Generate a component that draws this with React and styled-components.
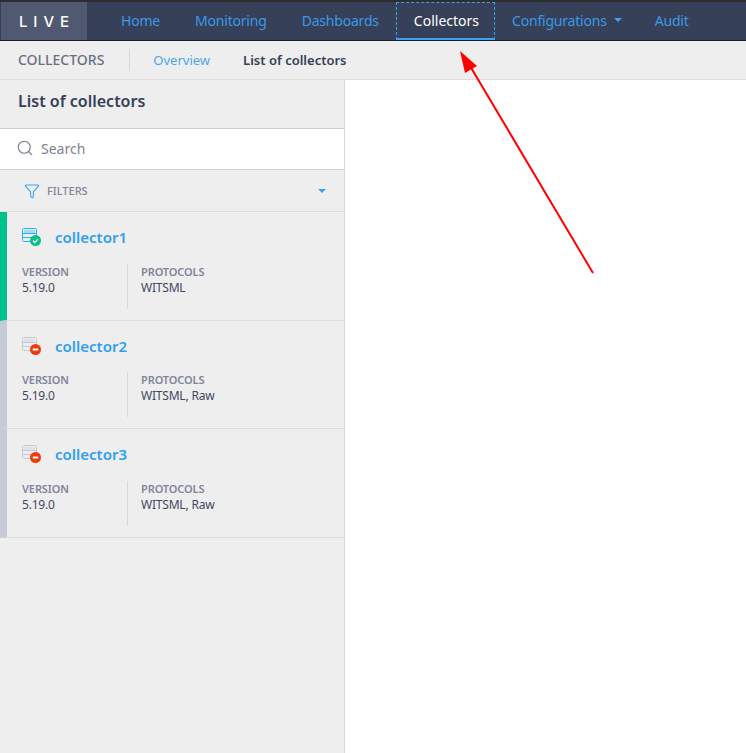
import React from 'react';
import styled, { createGlobalStyle } from 'styled-components';
import { Search, Filter } from 'lucide-react';

const GlobalStyle = createGlobalStyle`
  html, body {
    margin: 0;
    height: 100%;
    background: #fff;
  }
  #root {
    height: 100%;
  }
  * {
    box-sizing: border-box;
  }
`;

const Page = styled.div`
  position: relative;
  height: 753px;
  overflow: hidden;
  display: flex;
  flex-direction: column;
  font-family: "Noto Sans", "Open Sans", sans-serif;
  color: #353f58;
`;

const NavBar = styled.nav`
  height: 41px;
  flex: none;
  display: flex;
  background: #364059;
  border-top: 2px solid #2e2e2e;
  border-bottom: 1px solid #131c30;
  padding-left: 1px;
`;

const Logo = styled.div`
  width: 86px;
  background: #50596f;
  color: #fff;
  font-family: Inter, sans-serif;
  font-size: 15px;
  font-weight: 500;
  letter-spacing: 6px;
  display: flex;
  align-items: center;
  justify-content: center;
  padding-left: 6px;
  margin-right: 16.5px;
`;

const NavItem = styled.a`
  display: flex;
  align-items: center;
  gap: 7px;
  height: 38px;
  font-size: 14px;
  letter-spacing: ${props => props.active ? '0' : '-0.2px'};
  color: ${props => props.active ? '#fff' : '#3a9ae6'};
  padding: ${props => props.active ? '0 14.5px 0 16.5px' : '0 17.5px 2px'};
  border: ${props => props.active ? '1px dashed #36a3f4' : 'none'};
  border-bottom: ${props => props.active ? '2px solid #36a3f4' : 'none'};
`;

const Caret = styled.span`
  width: 0;
  height: 0;
  border-left: 4px solid transparent;
  border-right: 4px solid transparent;
  border-top: 4px solid #36a3f4;
`;

const NavCaret = styled(Caret)`
  margin-right: -2px;
`;

const SubBar = styled.div`
  height: 39px;
  flex: none;
  display: flex;
  align-items: center;
  background: #eeeeee;
  border-bottom: 1px solid #dcdcdc;
  padding-left: 18px;
  font-size: 13px;
`;

const SubTitle = styled.span`
  font-size: 14px;
  font-weight: 500;
  color: #697083;
  padding-right: 25px;
  margin-right: 23px;
  line-height: 22px;
  border-right: 1px solid #d8d8d8;
`;

const SubLink = styled.a`
  margin-right: 33px;
  color: ${props => props.active ? '#353f58' : '#4ba6ee'};
  font-weight: ${props => props.active ? 600 : 400};
`;

const Main = styled.div`
  flex: 1;
  display: flex;
  min-height: 0;
`;

const Sidebar = styled.aside`
  width: 345px;
  flex: none;
  background: #eeeeee;
  border-right: 1px solid #d8d8d8;
`;

const SidebarTitle = styled.h2`
  margin: 0;
  height: 48px;
  padding: 10px 18px 0;
  font-size: 16px;
  line-height: 22px;
  font-weight: 600;
  color: #353f58;
`;

const SearchBox = styled.div`
  height: 42px;
  display: flex;
  align-items: center;
  gap: 7px;
  padding: 0 0 2px 16px;
  background: #fff;
  border-top: 1px solid #ccd0d8;
  border-bottom: 1px solid #ccd0d8;
  font-size: 14px;
  color: #7d8290;
`;

const FiltersRow = styled.div`
  height: 42px;
  display: flex;
  align-items: center;
  padding: 0 18px 0 24px;
  border-bottom: 1px solid #dcdcdc;
  font-size: 11px;
  font-weight: 500;
  color: #81859a;
`;

const FiltersLabel = styled.span`
  flex: 1;
  margin-left: 7px;
`;

const Card = styled.div`
  height: 108.5px;
  padding: 14.25px 0 0 15px;
  border-left: 7px solid ${props => props.colour};
  border-bottom: 1px solid #dcdcdc;
`;

const CardHeader = styled.div`
  display: flex;
  align-items: center;
  height: 22px;
  margin-bottom: 15.5px;
`;

const CardName = styled.a`
  margin-left: 13px;
  font-size: 15px;
  font-weight: 600;
  color: #2f9ff0;
`;

const Columns = styled.div`
  display: flex;
`;

const Column = styled.div`
  width: ${props => props.wide ? 'auto' : '105px'};
  height: 45px;
  padding-left: ${props => props.wide ? '13px' : '0'};
  border-left: ${props => props.wide ? '1px solid #d8d8d8' : 'none'};
`;

const Label = styled.div`
  font-size: 11px;
  line-height: 16px;
  font-weight: 600;
  letter-spacing: -0.1px;
  color: #81859a;
`;

const Value = styled.div`
  font-size: 12px;
  line-height: 16px;
  letter-spacing: -0.2px;
  color: #3f4860;
`;

const Content = styled.main`
  flex: 1;
  background: #fff;
`;

const Arrow = styled.svg`
  position: absolute;
  top: 0;
  left: 0;
  pointer-events: none;
`;

function StatusIcon({ ok }) {
  const line = ok ? '#2aaef5' : '#c3c8d4';
  const badge = ok ? '#0bbf8c' : '#f03a0c';
  return (
    <svg width="20" height="20" viewBox="0 0 20 20" fill="none">
      <rect x="0.5" y="1.5" width="14" height="13" rx="1" stroke={line} />
      <rect x="2" y="3" width="11" height="3" fill={line} opacity="0.35" />
      <path d="M1 6.5h13M1 10.5h13" stroke={line} />
      <circle cx="13.5" cy="13.5" r="5.5" fill={badge} />
      {ok
        ? <path d="M11 13.7l1.8 1.7 3-3.2" stroke="#fff" strokeWidth="1.4" />
        : <path d="M10.8 13.5h5.4" stroke="#fff" strokeWidth="2" />}
    </svg>
  );
}

const collectors = [
  { name: 'collector1', protocols: 'WITSML', ok: true },
  { name: 'collector2', protocols: 'WITSML, Raw', ok: false },
  { name: 'collector3', protocols: 'WITSML, Raw', ok: false }
];

export default function App() {
  return (
    <Page>
      <GlobalStyle />
      <NavBar>
        <Logo>LIVE</Logo>
        <NavItem>Home</NavItem>
        <NavItem>Monitoring</NavItem>
        <NavItem>Dashboards</NavItem>
        <NavItem active>Collectors</NavItem>
        <NavItem>Configurations <NavCaret /></NavItem>
        <NavItem>Audit</NavItem>
      </NavBar>
      <SubBar>
        <SubTitle>COLLECTORS</SubTitle>
        <SubLink>Overview</SubLink>
        <SubLink active>List of collectors</SubLink>
      </SubBar>
      <Main>
        <Sidebar>
          <SidebarTitle>List of collectors</SidebarTitle>
          <SearchBox>
            <Search size={18} color="#7d8290" strokeWidth={1.5} />
            Search
          </SearchBox>
          <FiltersRow>
            <Filter size={16} color="#36a3f4" strokeWidth={1.6} />
            <FiltersLabel>FILTERS</FiltersLabel>
            <Caret />
          </FiltersRow>
          {collectors.map(c => (
            <Card key={c.name} colour={c.ok ? '#00c08b' : '#c5cad6'}>
              <CardHeader>
                <StatusIcon ok={c.ok} />
                <CardName>{c.name}</CardName>
              </CardHeader>
              <Columns>
                <Column>
                  <Label>VERSION</Label>
                  <Value>5.19.0</Value>
                </Column>
                <Column wide>
                  <Label>PROTOCOLS</Label>
                  <Value>{c.protocols}</Value>
                </Column>
              </Columns>
            </Card>
          ))}
        </Sidebar>
        <Content />
      </Main>
      <Arrow width="746" height="753">
        <path d="M593 273L470 66" stroke="#ff0000" strokeWidth="2" />
        <path d="M460 51L477 66L465 73Z" fill="#ff0000" />
      </Arrow>
    </Page>
  );
}
